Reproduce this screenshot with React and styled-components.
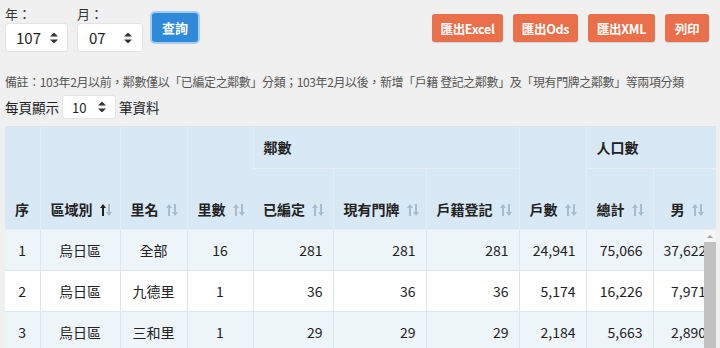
import React from 'react';
import styled, { createGlobalStyle } from 'styled-components';

const GlobalStyle = createGlobalStyle`
  html, body {
    margin: 0;
    padding: 0;
    background: #f0f0f0;
    font-family: "Noto Sans CJK TC", "Noto Sans", sans-serif;
    color: #222;
    overflow: hidden;
  }
`;

const Page = styled.div`
  padding: 6px 0 0 5px;
  width: 715px;
`;

const Toolbar = styled.div`
  display: flex;
  align-items: flex-start;
  justify-content: space-between;
  padding-right: 11px;
`;

const Filters = styled.div`
  display: flex;
  align-items: flex-start;
  gap: 9px;
`;

const Field = styled.label`
  display: flex;
  flex-direction: column;
  gap: 1px;
  font-size: 13px;
  line-height: 16px;
  color: #333;
`;

const SelectWrap = styled.div`
  position: relative;
  width: ${p => p.$w}px;
  height: ${p => p.$h}px;
`;

const Select = styled.select`
  appearance: none;
  -webkit-appearance: none;
  width: 100%;
  height: 100%;
  border: 1px solid #e4e4e4;
  border-radius: 3px;
  background: #fff;
  font-family: inherit;
  font-size: ${p => p.$fs}px;
  color: #222;
  padding: 0 0 0 ${p => p.$pl}px;
  outline: none;
`;

const Caret = styled.svg`
  position: absolute;
  right: ${p => p.$r}px;
  top: 50%;
  transform: translateY(-50%);
  pointer-events: none;
`;

const QueryButton = styled.button`
  margin-top: 7px;
  width: 46px;
  height: 29px;
  border: none;
  border-radius: 3px;
  background: #2f8bd9;
  color: #fff;
  font-family: inherit;
  font-weight: 700;
  font-size: 13px;
  box-shadow: 0 0 0 2px #a7cdf0;
  cursor: pointer;
`;

const Actions = styled.div`
  display: flex;
  gap: 10px;
  margin-top: 8px;
`;

const ActionButton = styled.button`
  width: ${p => p.$w}px;
  height: 28px;
  padding: 0;
  border: none;
  border-radius: 3px;
  background: #e9704a;
  color: #fff;
  font-family: inherit;
  font-weight: 700;
  font-size: 12.5px;
  letter-spacing: -0.3px;
  box-shadow: 0 1px 1px rgba(0, 0, 0, 0.12);
  cursor: pointer;
`;

const Note = styled.div`
  margin-top: 22px;
  font-size: 12px;
  letter-spacing: -0.4px;
  line-height: 16px;
  color: #555;
  white-space: nowrap;
`;

const PerPage = styled.div`
  display: flex;
  align-items: center;
  gap: 3px;
  margin-top: 5px;
  font-size: 13.5px;
  color: #222;
`;

const TableBox = styled.div`
  margin-top: 7px;
  width: 711px;
  border-top: 1px solid #e2e2e2;
`;

const Table = styled.table`
  width: 711px;
  table-layout: fixed;
  border-collapse: collapse;
  font-size: 14px;
`;

const HeadCell = styled.th`
  box-sizing: border-box;
  background: #d8e8f4;
  border-left: 1px solid #e5eef6;
  border-bottom: 1px solid #e5eef6;
  text-align: left;
  vertical-align: ${p => (p.$group ? 'middle' : 'bottom')};
  padding: ${p => (p.$group ? '0 10px' : '0 10px 10px 10px')};
  height: ${p => p.$h || 0}px;
  font-weight: 700;
  white-space: nowrap;
  overflow: hidden;
  &:first-child {
    border-left: none;
  }
`;

const Body = styled.div`
  position: relative;
  height: 160px;
  width: 711px;
  overflow: hidden;
`;

const ScrollTrack = styled.div`
  position: absolute;
  top: 0;
  right: 0;
  width: 12px;
  bottom: 0;
  background: #f5f5f5;
  display: flex;
  flex-direction: column;
  align-items: center;
`;

const ScrollArrow = styled.div`
  width: 0;
  height: 0;
  margin: 5px 0 4px;
  border-left: 3px solid transparent;
  border-right: 3px solid transparent;
  border-bottom: 3px solid #a3a3a3;
`;

const ScrollThumb = styled.div`
  width: 12px;
  flex: 1;
  background: #c1c1c1;
`;

const Row = styled.tr`
  background: ${p => (p.$odd ? '#eef5f9' : '#ffffff')};
`;

const Cell = styled.td`
  box-sizing: border-box;
  height: 41px;
  padding: 0 10px;
  border-left: 1px solid #dde7ee;
  border-bottom: 1px solid #dde7ee;
  text-align: ${p => p.$align || 'right'};
  white-space: nowrap;
  overflow: hidden;
  &:first-child {
    border-left: none;
  }
`;

const SortIcon = ({ active }) => (
  <svg width="12" height="12" viewBox="0 0 12 12" style={{ marginLeft: 7, verticalAlign: '-1px' }}>
    <path d="M3 0 L6 4 H4 V12 H2 V4 H0 Z" fill={active ? '#222' : '#a9bccb'} />
    <path d="M9 12 L12 8 H10 V0 H8 V8 H6 Z" fill="#a9bccb" />
  </svg>
);

const Updown = ({ r }) => (
  <Caret $r={r} width="8" height="11" viewBox="0 0 8 11">
    <path d="M4 0 L8 4 H0 Z M4 11 L0 7 H8 Z" fill="#333" />
  </Caret>
);

const widths = [35, 80, 67, 66, 80, 93, 93, 67, 67, 63];

const Cols = () => (
  <colgroup>
    {widths.map((w, i) => (
      <col key={i} style={{ width: w }} />
    ))}
  </colgroup>
);

const rows = [
  ['1', '烏日區', '全部', '16', '281', '281', '281', '24,941', '75,066', '37,622'],
  ['2', '烏日區', '九德里', '1', '36', '36', '36', '5,174', '16,226', '7,971'],
  ['3', '烏日區', '三和里', '1', '29', '29', '29', '2,184', '5,663', '2,890'],
  ['4', '烏日區', '仁德里', '1', '12', '12', '12', '1,042', '3,120', '1,570'],
];

const align = ['center', 'center', 'center', 'center'];

export default function App() {
  return (
    <Page>
      <GlobalStyle />
      <Toolbar>
        <Filters>
          <Field>
            年：
            <SelectWrap $w={63} $h={29}>
              <Select $fs={15} $pl={10} defaultValue="107">
                <option>107</option>
              </Select>
              <Updown r={10} />
            </SelectWrap>
          </Field>
          <Field>
            月：
            <SelectWrap $w={66} $h={29}>
              <Select $fs={15} $pl={11} defaultValue="07">
                <option>07</option>
              </Select>
              <Updown r={11} />
            </SelectWrap>
          </Field>
          <QueryButton>查詢</QueryButton>
        </Filters>
        <Actions>
          <ActionButton $w={71}>匯出Excel</ActionButton>
          <ActionButton $w={65}>匯出Ods</ActionButton>
          <ActionButton $w={67}>匯出XML</ActionButton>
          <ActionButton $w={44}>列印</ActionButton>
        </Actions>
      </Toolbar>
      <Note>
        備註：103年2月以前，鄰數僅以「已編定之鄰數」分類；103年2月以後，新增「戶籍 登記之鄰數」及「現有門牌之鄰數」等兩項分類
      </Note>
      <PerPage>
        每頁顯示
        <SelectWrap $w={54} $h={24}>
          <Select $fs={13} $pl={9} defaultValue="10">
            <option>10</option>
          </Select>
          <Updown r={10} />
        </SelectWrap>
        筆資料
      </PerPage>
      <TableBox>
        <Table>
          <Cols />
          <thead>
            <tr>
              <HeadCell rowSpan={2}>序</HeadCell>
              <HeadCell rowSpan={2}>區域別<SortIcon active /></HeadCell>
              <HeadCell rowSpan={2}>里名<SortIcon /></HeadCell>
              <HeadCell rowSpan={2}>里數<SortIcon /></HeadCell>
              <HeadCell colSpan={3} $group $h={41}>鄰數</HeadCell>
              <HeadCell rowSpan={2}>戶數<SortIcon /></HeadCell>
              <HeadCell colSpan={2} $group $h={41}>人口數</HeadCell>
            </tr>
            <tr>
              <HeadCell $h={61}>已編定<SortIcon /></HeadCell>
              <HeadCell>現有門牌<SortIcon /></HeadCell>
              <HeadCell>戶籍登記<SortIcon /></HeadCell>
              <HeadCell>總計<SortIcon /></HeadCell>
              <HeadCell style={{ paddingLeft: 17 }}>男<SortIcon /></HeadCell>
            </tr>
          </thead>
        </Table>
        <Body>
          <Table>
            <Cols />
            <tbody>
              {rows.map((r, i) => (
                <Row key={i} $odd={i % 2 === 0}>
                  {r.map((v, j) => (
                    <Cell key={j} $align={align[j]}>
                      {v}
                    </Cell>
                  ))}
                </Row>
              ))}
            </tbody>
          </Table>
          <ScrollTrack>
            <ScrollArrow />
            <ScrollThumb />
          </ScrollTrack>
        </Body>
      </TableBox>
    </Page>
  );
}
